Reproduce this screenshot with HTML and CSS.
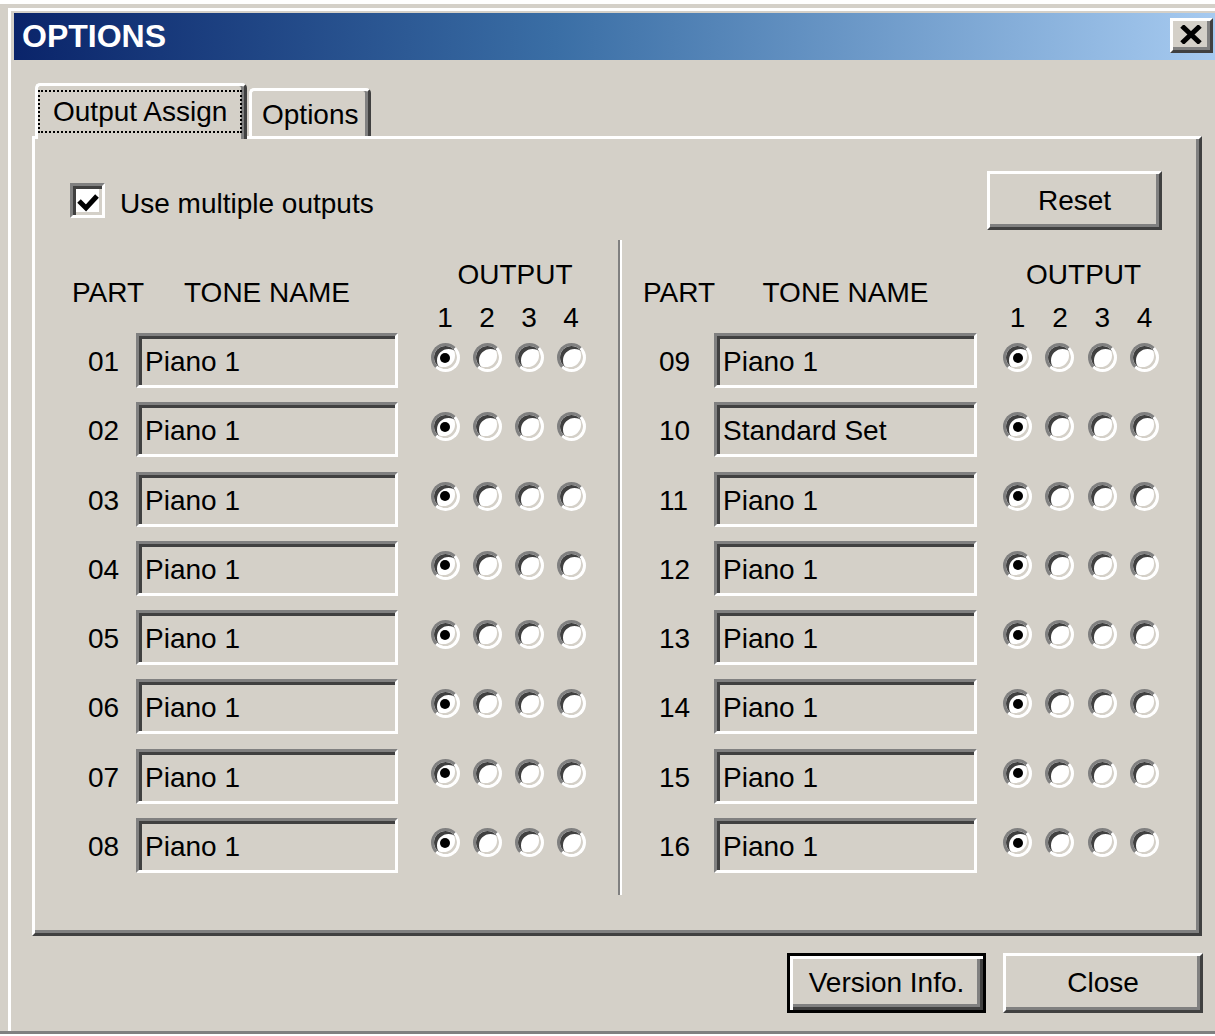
FILE: index.html
```html
<!DOCTYPE html>
<html lang="en">
<head>
<meta charset="utf-8">
<title>OPTIONS</title>
<link rel="stylesheet" href="styles.css">
</head>
<body>
<div class="window">
  <div class="frame">
    <div class="titlebar">
      <span class="title">OPTIONS</span>
      <button class="close-btn" aria-label="Close">
        <svg width="22" height="19" viewBox="0 0 22 19"><path d="M2 1 L20 18 M20 1 L2 18" stroke="#000" stroke-width="5" fill="none"/></svg>
      </button>
    </div>
    <div class="client">
      <div class="tabs">
        <div class="tab tab-active"><span class="focus">Output Assign</span></div>
        <div class="tab tab-idle">Options</div>
      </div>
      <div class="panel">
        <div class="toprow">
          <label class="check">
            <span class="checkbox"><svg width="29" height="29" viewBox="0 0 29 29"><path d="M6 15 L13 22 L24 10" stroke="#000" stroke-width="5" fill="none"/></svg></span>
            <span class="check-label">Use multiple outputs</span>
          </label>
          <button class="btn btn-reset">Reset</button>
        </div>
        <div class="groups">
          <div class="group group-left">
            <div class="head">
              <span class="h-part">PART</span>
              <span class="h-tone">TONE NAME</span>
              <span class="h-out">OUTPUT</span>
              <span class="h-n n1">1</span><span class="h-n n2">2</span><span class="h-n n3">3</span><span class="h-n n4">4</span>
            </div>
            <div class="rows">
              <div class="row"><span class="num">01</span><span class="field">Piano 1</span><span class="rc"><i class="radio on"></i></span><span class="rc"><i class="radio"></i></span><span class="rc"><i class="radio"></i></span><span class="rc"><i class="radio"></i></span></div>
              <div class="row"><span class="num">02</span><span class="field">Piano 1</span><span class="rc"><i class="radio on"></i></span><span class="rc"><i class="radio"></i></span><span class="rc"><i class="radio"></i></span><span class="rc"><i class="radio"></i></span></div>
              <div class="row"><span class="num">03</span><span class="field">Piano 1</span><span class="rc"><i class="radio on"></i></span><span class="rc"><i class="radio"></i></span><span class="rc"><i class="radio"></i></span><span class="rc"><i class="radio"></i></span></div>
              <div class="row"><span class="num">04</span><span class="field">Piano 1</span><span class="rc"><i class="radio on"></i></span><span class="rc"><i class="radio"></i></span><span class="rc"><i class="radio"></i></span><span class="rc"><i class="radio"></i></span></div>
              <div class="row"><span class="num">05</span><span class="field">Piano 1</span><span class="rc"><i class="radio on"></i></span><span class="rc"><i class="radio"></i></span><span class="rc"><i class="radio"></i></span><span class="rc"><i class="radio"></i></span></div>
              <div class="row"><span class="num">06</span><span class="field">Piano 1</span><span class="rc"><i class="radio on"></i></span><span class="rc"><i class="radio"></i></span><span class="rc"><i class="radio"></i></span><span class="rc"><i class="radio"></i></span></div>
              <div class="row"><span class="num">07</span><span class="field">Piano 1</span><span class="rc"><i class="radio on"></i></span><span class="rc"><i class="radio"></i></span><span class="rc"><i class="radio"></i></span><span class="rc"><i class="radio"></i></span></div>
              <div class="row"><span class="num">08</span><span class="field">Piano 1</span><span class="rc"><i class="radio on"></i></span><span class="rc"><i class="radio"></i></span><span class="rc"><i class="radio"></i></span><span class="rc"><i class="radio"></i></span></div>
            </div>
          </div>
          <div class="divider"></div>
          <div class="group group-right">
            <div class="head">
              <span class="h-part">PART</span>
              <span class="h-tone">TONE NAME</span>
              <span class="h-out">OUTPUT</span>
              <span class="h-n n1">1</span><span class="h-n n2">2</span><span class="h-n n3">3</span><span class="h-n n4">4</span>
            </div>
            <div class="rows">
              <div class="row"><span class="num">09</span><span class="field">Piano 1</span><span class="rc"><i class="radio on"></i></span><span class="rc"><i class="radio"></i></span><span class="rc"><i class="radio"></i></span><span class="rc"><i class="radio"></i></span></div>
              <div class="row"><span class="num">10</span><span class="field">Standard Set</span><span class="rc"><i class="radio on"></i></span><span class="rc"><i class="radio"></i></span><span class="rc"><i class="radio"></i></span><span class="rc"><i class="radio"></i></span></div>
              <div class="row"><span class="num">11</span><span class="field">Piano 1</span><span class="rc"><i class="radio on"></i></span><span class="rc"><i class="radio"></i></span><span class="rc"><i class="radio"></i></span><span class="rc"><i class="radio"></i></span></div>
              <div class="row"><span class="num">12</span><span class="field">Piano 1</span><span class="rc"><i class="radio on"></i></span><span class="rc"><i class="radio"></i></span><span class="rc"><i class="radio"></i></span><span class="rc"><i class="radio"></i></span></div>
              <div class="row"><span class="num">13</span><span class="field">Piano 1</span><span class="rc"><i class="radio on"></i></span><span class="rc"><i class="radio"></i></span><span class="rc"><i class="radio"></i></span><span class="rc"><i class="radio"></i></span></div>
              <div class="row"><span class="num">14</span><span class="field">Piano 1</span><span class="rc"><i class="radio on"></i></span><span class="rc"><i class="radio"></i></span><span class="rc"><i class="radio"></i></span><span class="rc"><i class="radio"></i></span></div>
              <div class="row"><span class="num">15</span><span class="field">Piano 1</span><span class="rc"><i class="radio on"></i></span><span class="rc"><i class="radio"></i></span><span class="rc"><i class="radio"></i></span><span class="rc"><i class="radio"></i></span></div>
              <div class="row"><span class="num">16</span><span class="field">Piano 1</span><span class="rc"><i class="radio on"></i></span><span class="rc"><i class="radio"></i></span><span class="rc"><i class="radio"></i></span><span class="rc"><i class="radio"></i></span></div>
            </div>
          </div>
        </div>
      </div>
      <div class="footer">
        <button class="btn btn-default btn-version">Version Info.</button>
        <button class="btn btn-close">Close</button>
      </div>
    </div>
  </div>
</div>
</body>
</html>
```

FILE: styles.css
```css
* { box-sizing: border-box; }

html, body { margin: 0; padding: 0; }

body {
  background: #fff;
  width: 1215px;
  height: 1036px;
  overflow: hidden;
  font-family: "Liberation Sans", Arial, sans-serif;
  font-size: 28px;
  color: #000;
}

/* dialog window */
.window {
  margin-top: 4px;
  height: 1030px;
  background: #d4d0c8;
  padding: 4px 0 0 8px;
  border-bottom: 3px solid #808080;
}

.frame {
  height: 100%;
  border-top: 3px solid #fff;
  border-left: 3px solid #fff;
  padding: 2px 0 0 3px;
}

/* caption */
.titlebar {
  height: 47px;
  display: flex;
  justify-content: space-between;
  align-items: flex-start;
  padding: 0 2px 0 8px;
  background: linear-gradient(to right, #0a246a 0%, #3a6ea5 45%, #a6caf0 100%);
}

.title {
  font-weight: bold;
  font-size: 32px;
  line-height: 47px;
  color: #fff;
}

.close-btn {
  margin-top: 5px;
  width: 43px;
  height: 35px;
  padding: 0;
  display: flex;
  align-items: center;
  justify-content: center;
  background: #d4d0c8;
  border: 3px solid;
  border-color: #fff #404040 #404040 #fff;
  box-shadow: inset -3px -3px 0 #808080;
}

.close-btn svg { display: block; margin: 0 2px 2px 0; }

/* client area */
.client {
  padding: 23px 13px 0 18px;
}

/* tab strip */
.tabs {
  display: flex;
  align-items: flex-end;
  height: 53px;
  padding-left: 3px;
}

.tab {
  background: #d4d0c8;
  border-top: 3px solid #fff;
  border-left: 3px solid #fff;
  border-right: 3px solid #404040;
  box-shadow: inset -3px 0 0 #808080;
  border-radius: 5px 5px 0 0;
  white-space: nowrap;
}

.tab-active {
  position: relative;
  z-index: 1;
  width: 212px;
  height: 56px;
  margin-bottom: -3px;
  padding: 4px 2px 0 0;
}

.focus {
  display: block;
  height: 43px;
  line-height: 39px;
  padding-left: 13px;
  border: 2px dotted #000;
}

.tab-idle {
  height: 48px;
  margin-left: 2px;
  padding: 2px 9px 0 10px;
  line-height: 43px;
}

/* tab page */
.panel {
  height: 800px;
  border: 3px solid;
  border-color: #fff #404040 #404040 #fff;
  box-shadow: inset -3px -3px 0 #808080;
  padding: 32px 37px 0 35px;
}

.toprow {
  height: 59px;
  display: flex;
  justify-content: space-between;
  align-items: center;
}

.check {
  display: flex;
  align-items: center;
  gap: 15px;
}

.checkbox {
  width: 35px;
  height: 35px;
  background: #fff;
  border: 3px solid;
  border-color: #808080 #fff #fff #808080;
  box-shadow: inset 3px 3px 0 #404040, inset -3px -3px 0 #d4d0c8;
}

.checkbox svg { display: block; }

.check-label {
  line-height: 32px;
  margin-top: 6px;
}

.btn {
  font: inherit;
  color: #000;
  padding: 0;
  background: #d4d0c8;
  border: 3px solid;
  border-color: #fff #404040 #404040 #fff;
  box-shadow: inset -3px -3px 0 #808080;
}

.btn-reset {
  width: 175px;
  height: 59px;
}

.btn-default {
  border-color: #000;
  box-shadow: inset 3px 3px 0 #fff, inset -3px -3px 0 #404040, inset -6px -6px 0 #808080;
}

/* part groups */
.groups {
  margin-top: 10px;
  height: 655px;
  display: flex;
  padding-left: 2px;
}

.group {
  padding-top: 19px;
  --part: 64px;
  --field: 262px;
  --sp: 26px;
  --rc: 42px;
  --out-shift: 14px;
}

.group-right {
  margin-left: 21px;
  --part: 71px;
  --field: 263px;
  --sp: 19.5px;
  --rc: 42.3px;
  --out-shift: 5px;
}

.divider {
  margin-left: 26px;
  width: 4px;
  border-left: 2px solid #808080;
  border-right: 2px solid #fff;
}

.head,
.row {
  display: grid;
  grid-template-columns: var(--part) var(--field) var(--sp) repeat(4, var(--rc));
}

.head {
  grid-template-rows: 43px 31px;
  line-height: 32px;
  white-space: nowrap;
}

.h-part {
  grid-column: 1;
  grid-row: 1 / span 2;
  margin-top: 18px;
}

.h-tone {
  grid-column: 2;
  grid-row: 1 / span 2;
  margin-top: 18px;
  text-align: center;
}

.h-out {
  grid-column: 4 / span 4;
  grid-row: 1;
  text-align: center;
  padding-left: var(--out-shift);
}

.h-n { grid-row: 2; text-align: center; }
.n1 { grid-column: 4; }
.n2 { grid-column: 5; }
.n3 { grid-column: 6; }
.n4 { grid-column: 7; }

.rows {
  display: flex;
  flex-direction: column;
  gap: 14.3px;
}

.row { height: 55px; }

.num {
  grid-column: 1;
  padding: 1px 0 0 16px;
  line-height: 55px;
}

.field {
  grid-column: 2;
  height: 55px;
  border: 3px solid;
  border-color: #808080 #fff #fff #808080;
  box-shadow: inset 3px 3px 0 #404040, inset -3px -3px 0 #d4d0c8;
  padding: 2px 0 0 6px;
  line-height: 47px;
  white-space: nowrap;
}

.rc {
  display: flex;
  align-items: center;
  justify-content: center;
  padding-bottom: 7px;
}
.row .rc:nth-child(3) { grid-column: 4; }

.radio {
  position: relative;
  display: block;
  width: 29px;
  height: 29px;
  border-radius: 50%;
  background: #fff;
  border: 3px solid;
  border-color: #808080 #fff #fff #808080;
  box-shadow: inset 3px 3px 0 #404040, inset -2px -2px 0 #d4d0c8;
}

.radio.on::after {
  content: "";
  position: absolute;
  left: 6.5px;
  top: 6.5px;
  width: 10px;
  height: 10px;
  border-radius: 50%;
  background: #000;
}

/* dialog buttons */
.footer {
  display: flex;
  justify-content: flex-end;
  gap: 17px;
  margin: 17px -1px 0 0;
}

.btn-version { width: 199px; height: 60px; }
.btn-close { width: 200px; height: 60px; }
```
